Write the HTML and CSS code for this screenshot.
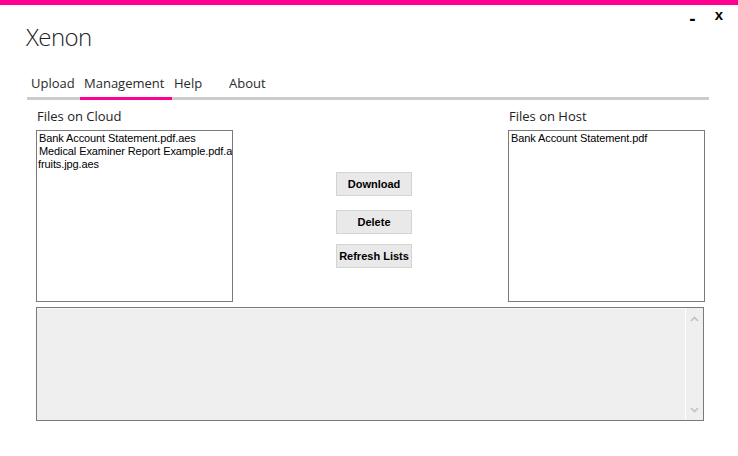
FILE: index.html
```html
<!DOCTYPE html>
<html>
<head>
<meta charset="utf-8">
<link rel="stylesheet" href="styles.css">
</head>
<body>
<div class="window">
  <div class="accent"></div>
  <div class="header">
    <div class="title">Xenon</div>
    <div class="controls">
      <span class="ctl-min">-</span>
      <span class="ctl-close">x</span>
    </div>
  </div>
  <div class="tabs">
    <div class="tab tab-upload">Upload</div>
    <div class="tab tab-manage active">Management</div>
    <div class="tab tab-help">Help</div>
    <div class="tab tab-about">About</div>
  </div>
  <div class="panel">
    <div class="col">
      <div class="label">Files on Cloud</div>
      <div class="listbox">
        <div class="item">Bank Account Statement.pdf.aes</div>
        <div class="item">Medical Examiner Report Example.pdf.aes</div>
        <div class="item item-fruit">fruits.jpg.aes</div>
      </div>
    </div>
    <div class="actions">
      <button class="btn btn-download">Download</button>
      <button class="btn btn-delete">Delete</button>
      <button class="btn btn-refresh">Refresh Lists</button>
    </div>
    <div class="col">
      <div class="label">Files on Host</div>
      <div class="listbox">
        <div class="item">Bank Account Statement.pdf</div>
      </div>
    </div>
  </div>
  <div class="log">
    <div class="log-body"></div>
    <div class="scrollbar">
      <svg class="arrow" width="9" height="6" viewBox="0 0 9 6"><path d="M1 5 L4.5 1.5 L8 5" fill="none" stroke="#c2c2c2" stroke-width="1.6"/></svg>
      <svg class="arrow" width="9" height="6" viewBox="0 0 9 6"><path d="M1 1 L4.5 4.5 L8 1" fill="none" stroke="#c2c2c2" stroke-width="1.6"/></svg>
    </div>
  </div>
</div>
</body>
</html>
```
FILE: styles.css
```css
html, body {
  margin: 0;
  padding: 0;
  background: #ffffff;
}
.window {
  width: 738px;
  height: 456px;
  overflow: hidden;
  background: #ffffff;
  font-family: "Open Sans", "Noto Sans", sans-serif;
  color: #1e1e1e;
}
.accent {
  height: 5px;
  background: #ff0090;
}
.header {
  display: flex;
  justify-content: space-between;
  align-items: flex-start;
  height: 61px;
}
.title {
  margin-left: 26px;
  margin-top: 17px;
  font-size: 24px;
  font-weight: 300;
  line-height: 30px;
  color: #222;
  letter-spacing: -0.6px;
}
.controls {
  display: flex;
  align-items: flex-start;
  margin-right: 15px;
  margin-top: 1px;
  font-family: "Liberation Sans", Arial, sans-serif;
  font-weight: bold;
  color: #000;
}
.ctl-min {
  font-size: 19px;
  line-height: 20px;
  margin-right: 19px;
  margin-top: 3px;
}
.ctl-close {
  font-size: 15px;
  line-height: 20px;
  margin-top: -1px;
}
.tabs {
  display: flex;
  margin-left: 27px;
  width: 682px;
  height: 31px;
  border-bottom: 3px solid #cccccc;
  font-size: 13px;
  line-height: 18px;
}
.tab {
  padding-top: 8px;
  padding-left: 4px;
  color: #2a2a2a;
  box-sizing: border-box;
  height: 34px;
}
.tab-upload { width: 53px; }
.tab-manage { width: 92px; }
.tab-help { width: 53px; padding-left: 2px; }
.tab-about { width: 60px; }
.tab.active {
  border-bottom: 3px solid #ff0090;
}
.panel {
  display: grid;
  grid-template-columns: 197px 1fr 197px;
  margin: 6px 33px 0 36px;
}
.col {
  display: flex;
  flex-direction: column;
}
.label {
  font-size: 13px;
  line-height: 20px;
  padding-left: 1px;
  color: #222;
  height: 24px;
}
.listbox {
  height: 172px;
  box-sizing: border-box;
  border: 1px solid #7a7a7a;
  padding: 1px 0 0 2px;
  overflow: hidden;
  font-family: "Liberation Sans", Arial, sans-serif;
  font-size: 11px;
  line-height: 13px;
  letter-spacing: -0.1px;
  color: #000;
  white-space: nowrap;
}
.item-fruit {
  margin-left: -1px;
}
.actions {
  display: flex;
  flex-direction: column;
  align-items: flex-start;
  padding-top: 66px;
  padding-left: 103px;
}
.btn {
  width: 76px;
  height: 24px;
  box-sizing: border-box;
  background: #e9e9e9;
  border: 1px solid #d4d4d4;
  font-family: "Liberation Sans", Arial, sans-serif;
  font-weight: bold;
  font-size: 11px;
  color: #000;
  padding: 0;
}
.btn-delete { margin-top: 14px; }
.btn-refresh { margin-top: 10px; }
.log {
  display: flex;
  margin: 5px 34px 0 36px;
  height: 114px;
  box-sizing: border-box;
  border: 1px solid #7a7a7a;
  background: #efefef;
}
.log-body {
  flex: 1;
  border-top: 1px solid #f7f7f7;
}
.scrollbar {
  width: 17px;
  border-left: 1px solid #ffffff;
  display: flex;
  flex-direction: column;
  justify-content: space-between;
  align-items: center;
  padding: 8px 0 7px;
}
.arrow {
  display: block;
}
```
